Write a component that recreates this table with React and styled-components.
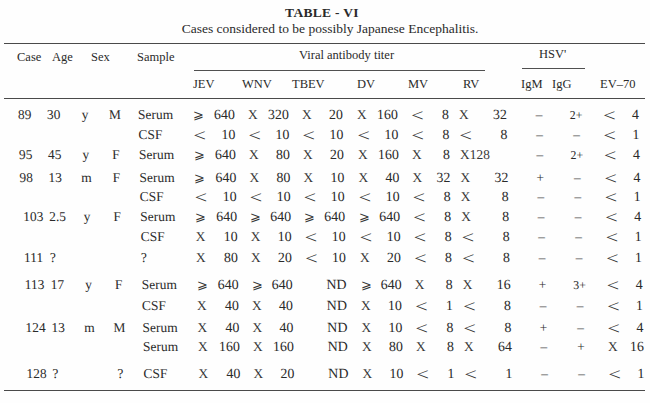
import React from "react";
import styled, { createGlobalStyle } from "styled-components";

const GlobalStyle = createGlobalStyle`
  html, body { margin: 0; padding: 0; background: #fefefe; }
  body { font-family: "Liberation Serif", "Times New Roman", serif; color: #2a2a2a; }
`;

const COLS = "46px 28px 22px 38px 59px 55px 54px 55px 54px 48px 61px 38px 36px 56px";

const VIRUS = [
  { key: "JEV", w: 42, dx: 0 },
  { key: "WNV", w: 41, dx: -6 },
  { key: "TBEV", w: 41, dx: -10 },
  { key: "DV", w: 41, dx: 0 },
  { key: "MV", w: 38, dx: -3 },
  { key: "RV", w: 48, dx: 4 },
];

const ROWS = [
  { c: "89", a: "30", u: "y", s: "M", smp: "Serum", t: [["≥", "640"], ["X", "320"], ["X", "20"], ["X", "160"], ["<", "8"], ["X", "32"]], igm: "–", igg: "2+", ev: ["<", "4"] },
  { smp: "CSF", t: [["<", "10"], ["<", "10"], ["<", "10"], ["<", "10"], ["<", "8"], ["<", "8"]], igm: "–", igg: "–", ev: ["<", "1"] },
  { c: "95", a: "45", u: "y", s: "F", smp: "Serum", t: [["≥", "640"], ["X", "80"], ["X", "20"], ["X", "160"], ["X", "8"], ["X128", ""]], igm: "–", igg: "2+", ev: ["<", "4"] },
  { gap: 3, c: "98", a: "13", u: "m", s: "F", smp: "Serum", t: [["≥", "640"], ["X", "80"], ["X", "10"], ["X", "40"], ["X", "32"], ["X", "32"]], igm: "+", igg: "–", ev: ["<", "4"] },
  { gap: -1, smp: "CSF", t: [["<", "10"], ["<", "10"], ["<", "10"], ["<", "10"], ["<", "8"], ["X", "8"]], igm: "–", igg: "–", ev: ["<", "1"] },
  { c: "103", a: "2.5", u: "y", s: "F", smp: "Serum", t: [["≥", "640"], ["≥", "640"], ["≥", "640"], ["≥", "640"], ["<", "8"], ["X", "8"]], igm: "–", igg: "–", ev: ["<", "4"] },
  { smp: "CSF", t: [["X", "10"], ["X", "10"], ["<", "10"], ["<", "10"], ["<", "8"], ["<", "8"]], igm: "–", igg: "–", ev: ["<", "1"] },
  { gap: 1, c: "111", a: "?", smp: "?", t: [["X", "80"], ["X", "20"], ["<", "10"], ["X", "20"], ["<", "8"], ["<", "8"]], igm: "–", igg: "–", ev: ["<", "1"] },
  { gap: 7, c: "113", a: "17", u: "y", s: "F", smp: "Serum", t: [["≥", "640"], ["≥", "640"], ["", "ND"], ["≥", "640"], ["X", "8"], ["X", "16"]], igm: "+", igg: "3+", ev: ["<", "4"] },
  { gap: 1, smp: "CSF", t: [["X", "40"], ["X", "40"], ["", "ND"], ["X", "10"], ["<", "1"], ["<", "8"]], igm: "–", igg: "–", ev: ["<", "1"] },
  { gap: 2, c: "124", a: "13", u: "m", s: "M", smp: "Serum", t: [["X", "40"], ["X", "40"], ["", "ND"], ["X", "10"], ["<", "8"], ["<", "8"]], igm: "+", igg: "–", ev: ["<", "4"] },
  { gap: -1, smp: "Serum", t: [["X", "160"], ["X", "160"], ["", "ND"], ["X", "80"], ["X", "8"], ["X", "64"]], igm: "–", igg: "+", ev: ["X", "16"] },
  { gap: 7, c: "128", a: "?", s: "?", smp: "CSF", t: [["X", "40"], ["X", "20"], ["", "ND"], ["X", "10"], ["<", "1"], ["<", "1"]], igm: "–", igg: "–", ev: ["<", "1"] },
];

const Page = styled.div`
  width: 650px;
  height: 403px;
  overflow: hidden;
  padding-top: 5px;
  box-sizing: border-box;
`;

const Title = styled.div`
  font-weight: bold;
  font-size: 13.5px;
  line-height: 16px;
  text-align: center;
  padding-right: 6px;
  letter-spacing: 0.3px;
`;

const Caption = styled.div`
  font-size: 13.5px;
  line-height: 16px;
  text-align: center;
  padding-left: 10px;
`;

const Rule = styled.div`
  margin: ${(p) => p.$mt || 0}px 5px 0 4px;
  border-top: 1.5px solid #4a4a4a;
`;

const HeadGrid = styled.div`
  display: grid;
  grid-template-columns: ${COLS};
  grid-template-rows: 27px 27px;
  font-size: 12.5px;
`;

const HeadCell = styled.div`
  grid-row: 1;
  grid-column: ${(p) => p.$col};
  line-height: 26px;
  padding-left: ${(p) => p.$pl}px;
  white-space: nowrap;
`;

const GroupCell = styled.div`
  grid-row: 1;
  grid-column: ${(p) => p.$cols};
  display: flex;
  flex-direction: column;
`;

const GroupLabel = styled.div`
  line-height: ${(p) => p.$lh}px;
  padding-left: ${(p) => p.$pl}px;
  white-space: nowrap;
`;

const GroupRule = styled.div`
  margin-top: auto;
  margin-left: ${(p) => p.$ml}px;
  margin-right: ${(p) => p.$mr}px;
  margin-bottom: ${(p) => p.$mb}px;
  border-top: 1.5px solid #505050;
`;

const SubHead = styled.div`
  grid-row: 2;
  grid-column: ${(p) => p.$col};
  line-height: 26px;
  white-space: nowrap;
  padding-left: ${(p) => Math.max(p.$dx, 0)}px;
  margin-left: ${(p) => Math.min(p.$dx, 0)}px;
`;

const Body = styled.div`
  padding-top: 6px;
  padding-bottom: 6px;
  font-size: 13.5px;
  transform: skewX(1.2deg);
  transform-origin: 0 15px;
`;

const Row = styled.div`
  display: grid;
  grid-template-columns: ${COLS};
  height: 20px;
  line-height: 20px;
  margin-top: ${(p) => p.$gap || 0}px;
  white-space: nowrap;
`;

const CaseCell = styled.div`
  padding-left: ${(p) => (p.$wide ? 21 : 18)}px;
`;

const AgeCell = styled.div`
  padding-left: 1px;
`;

const CenterCell = styled.div`
  text-align: center;
`;

const SampleCell = styled.div`
  padding-left: 4px;
`;

const Titer = styled.div`
  display: flex;
  justify-content: space-between;
  align-items: center;
  width: ${(p) => p.$w}px;
  margin-left: ${(p) => p.$ml || 0}px;
`;

const Sym = styled.span`
  display: inline-block;
  color: #363636;
  line-height: 20px;
  font-size: ${(p) => (p.$kind === "geq" ? "13px" : p.$kind === "lt" ? "17px" : "13.5px")};
  font-family: ${(p) => (p.$kind === "geq" ? '"DejaVu Serif", "Liberation Serif", serif' : "inherit")};
  transform: ${(p) => (p.$kind === "lt" ? "translateY(0.5px) scaleX(1.3)" : "none")};
  transform-origin: left center;
`;

const Num = styled.span`
  font-size: 14px;
`;

const Mark = styled.div`
  text-align: center;
  color: ${(p) => (p.$dash ? "#555" : "#2a2a2a")};
  font-size: ${(p) => (p.$small ? "12px" : "13.5px")};
`;

function symKind(s) {
  if (s === "≥") return "geq";
  if (s === "<") return "lt";
  return "x";
}

function TiterValue({ pair, w, ml }) {
  const [s, n] = pair;
  const shown = s === "≥" ? "⩾" : s;
  return (
    <Titer $w={w} $ml={ml}>
      <Sym $kind={symKind(s)}>{shown}</Sym>
      <Num>{n}</Num>
    </Titer>
  );
}

export default function App() {
  return (
    <>
      <GlobalStyle />
      <Page>
        <Title>TABLE - VI</Title>
        <Caption>Cases considered to be possibly Japanese Encephalitis.</Caption>
        <Rule $mt={6} />
        <HeadGrid>
          <HeadCell $col="1" $pl={17}>Case</HeadCell>
          <HeadCell $col="2" $pl={6}>Age</HeadCell>
          <HeadCell $col="3 / 5" $pl={17}>Sex</HeadCell>
          <HeadCell $col="5" $pl={3}>Sample</HeadCell>
          <GroupCell $cols="6 / 12">
            <GroupLabel $lh={22} $pl={106}>Viral antibody titer</GroupLabel>
            <GroupRule $ml={1} $mr={35} $mb={0} />
          </GroupCell>
          <GroupCell $cols="12 / 14">
            <GroupLabel $lh={20} $pl={19}>HSV'</GroupLabel>
            <GroupRule $ml={2} $mr={9} $mb={2} />
          </GroupCell>
          {VIRUS.map((v, i) => (
            <SubHead key={v.key} $col={i + 6} $dx={v.dx}>
              {v.key}
            </SubHead>
          ))}
          <SubHead $col={12} $dx={1}>IgM</SubHead>
          <SubHead $col={13} $dx={-6}>IgG</SubHead>
          <SubHead $col={14} $dx={6}>EV–70</SubHead>
        </HeadGrid>
        <Rule />
        <Body>
          {ROWS.map((r, i) => (
            <Row key={i} $gap={r.gap}>
              <CaseCell $wide={(r.c || "").length > 2}>{r.c || ""}</CaseCell>
              <AgeCell>{r.a || ""}</AgeCell>
              <CenterCell>{r.u || ""}</CenterCell>
              <CenterCell>{r.s || ""}</CenterCell>
              <SampleCell>{r.smp}</SampleCell>
              {r.t.map((p, j) => (
                <TiterValue key={j} pair={p} w={VIRUS[j].w} />
              ))}
              <Mark $dash={r.igm === "–"}>{r.igm}</Mark>
              <Mark $dash={r.igg === "–"} $small={r.igg.length > 1}>{r.igg}</Mark>
              <TiterValue pair={r.ev} w={36} ml={9} />
            </Row>
          ))}
        </Body>
        <Rule />
      </Page>
    </>
  );
}
